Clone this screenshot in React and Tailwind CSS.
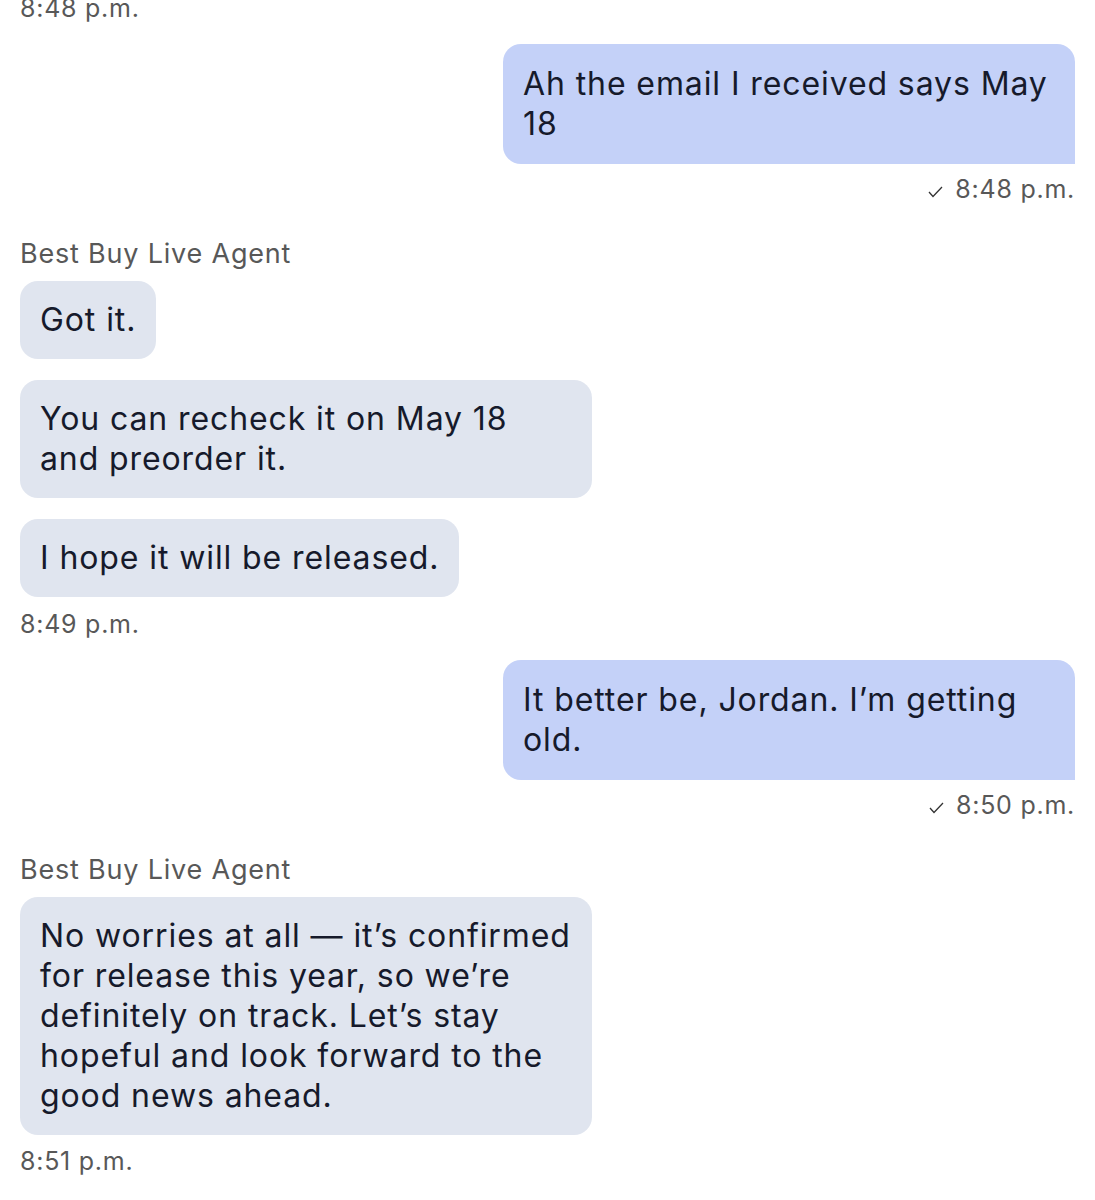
import React from "react";

const font = "font-['Inter','Liberation_Sans',sans-serif]";

const UserBubble = ({ text }) => (
  <div className="flex justify-end">
    <div className="w-[572px] bg-[#c4d1f8] rounded-[18px] rounded-br-none px-5 py-5 text-[32px] leading-10 tracking-[0.9px] text-[#161a2b]">
      {text}
    </div>
  </div>
);

const AgentBubble = ({ text, wide }) => (
  <div className="flex justify-start">
    <div
      className={`${wide ? "w-[572px]" : "max-w-[572px]"} bg-[#e0e5ef] rounded-[18px] px-5 py-[19px] text-[32px] leading-10 tracking-[0.9px] text-[#161a2b]`}
    >
      {text}
    </div>
  </div>
);

const Check = () => (
  <svg width="15" height="12" viewBox="0 0 15 12" className="mr-[12px] mt-[5px]">
    <polyline
      points="1,6 5,10.5 14,1"
      fill="none"
      stroke="#333"
      strokeWidth="1.3"
    />
  </svg>
);

const Stamp = ({ time, right, className = "" }) => (
  <div
    className={`flex items-center ${right ? "justify-end" : "justify-start"} text-[25px] leading-7 tracking-[0.75px] text-[#585858] ${className}`}
  >
    {right && <Check />}
    <span>{time}</span>
  </div>
);

const Label = ({ className = "" }) => (
  <div className={`text-[27px] leading-8 tracking-[0.8px] text-[#585858] ${className}`}>
    Best Buy Live Agent
  </div>
);

export default function App() {
  return (
    <div className={`${font} bg-white w-[1095px] h-[1200px] overflow-hidden px-5`}>
      <div className="flex flex-col -mt-[6px]">
        <Stamp time="8:48 p.m." />

        <div className="mt-[22px]">
          <UserBubble text="Ah the email I received says May 18" />
        </div>
        <Stamp time="8:48 p.m." right className="mt-[11px]" />

        <Label className="mt-[35px]" />
        <div className="mt-[11px] flex flex-col gap-[21px]">
          <AgentBubble text="Got it." />
          <AgentBubble text="You can recheck it on May 18 and preorder it." wide />
          <AgentBubble text="I hope it will be released." />
        </div>
        <Stamp time="8:49 p.m." className="mt-[13px]" />

        <div className="mt-[22px]">
          <UserBubble text="It better be, Jordan. I’m getting old." />
        </div>
        <Stamp time="8:50 p.m." right className="mt-[11px]" />

        <Label className="mt-[35px]" />
        <div className="mt-[11px]">
          <AgentBubble
            text="No worries at all — it’s confirmed for release this year, so we’re definitely on track. Let’s stay hopeful and look forward to the good news ahead."
            wide
          />
        </div>
        <Stamp time="8:51 p.m." className="mt-[12px]" />
      </div>
    </div>
  );
}
